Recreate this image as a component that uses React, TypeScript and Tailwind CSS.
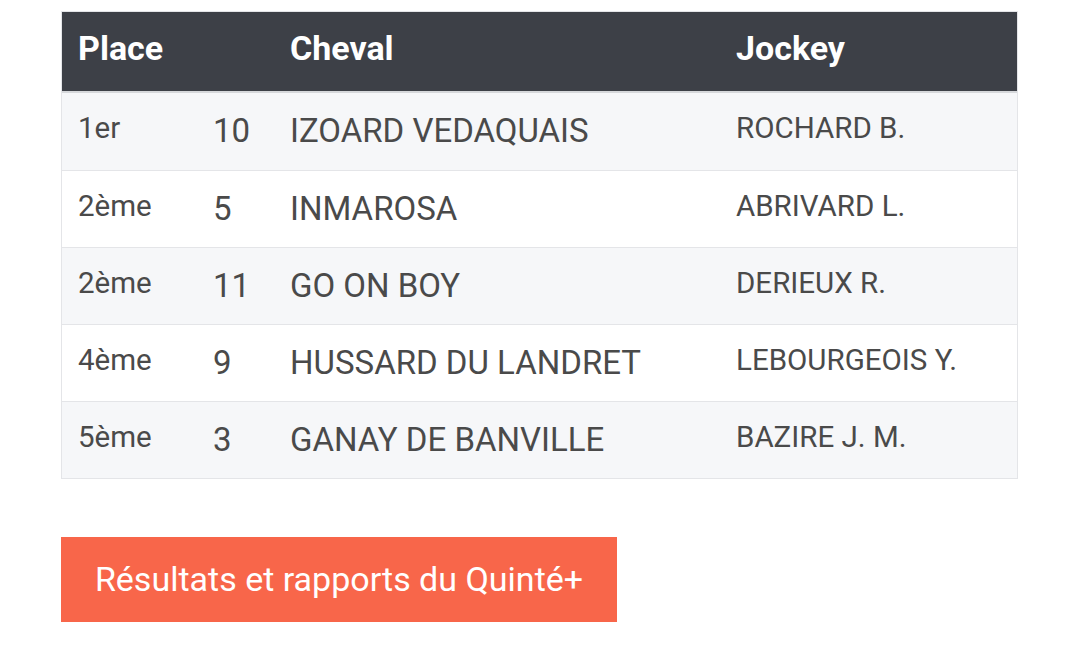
const rows = [
  { place: "1er", num: "10", horse: "IZOARD VEDAQUAIS", jockey: "ROCHARD B." },
  { place: "2ème", num: "5", horse: "INMAROSA", jockey: "ABRIVARD L." },
  { place: "2ème", num: "11", horse: "GO ON BOY", jockey: "DERIEUX R." },
  { place: "4ème", num: "9", horse: "HUSSARD DU LANDRET", jockey: "LEBOURGEOIS Y." },
  { place: "5ème", num: "3", horse: "GANAY DE BANVILLE", jockey: "BAZIRE J. M." },
];

export default function App() {
  return (
    <main className="min-h-screen bg-white pt-[11px] pl-[61px] font-['Roboto',sans-serif]">
      <div className="w-[957px] border border-[#e4e5e8]">
        <div className="flex h-[79px] items-center bg-[#3d4047] pb-[6px] text-[34px] font-bold text-white">
          <div className="w-[212px] pl-[16px]">Place</div>
          <div className="w-[446px] pl-[16px]">Cheval</div>
          <div className="flex-1 pl-[16px]">Jockey</div>
        </div>
        <div className="h-[2px] bg-[#d6d8db]" />
        {rows.map((r, i) => (
          <div
            key={i}
            className={`flex h-[77px] items-start text-[#4a4a4a] ${i > 0 ? "border-t border-[#e4e5e8]" : ""} ${i % 2 === 0 ? "bg-[#f6f7f9]" : "bg-white"}`}
          >
            <div className="w-[135px] pt-[13px] pl-[16px] text-[29.5px]">{r.place}</div>
            <div className="w-[77px] pt-[13px] pl-[16px] text-[33px]">{r.num}</div>
            <div className="w-[446px] pt-[13px] pl-[16px] text-[33px]">{r.horse}</div>
            <div className="flex-1 pt-[13px] pl-[16px] text-[29.5px]">{r.jockey}</div>
          </div>
        ))}
      </div>
      <button className="mt-[58px] flex h-[85px] w-[556px] items-center justify-center bg-[#f8664a] text-[34px] text-white">
        Résultats et rapports du Quinté+
      </button>
    </main>
  );
}
